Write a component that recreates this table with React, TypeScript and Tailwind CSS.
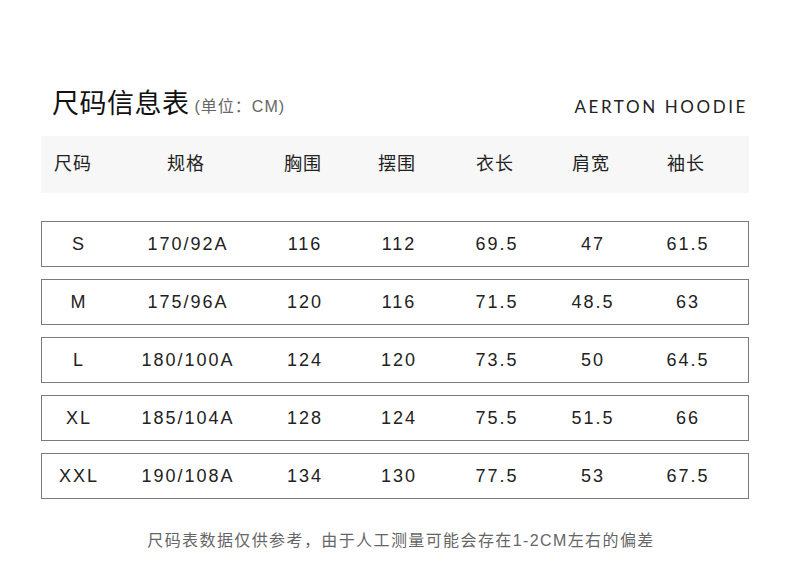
import React from 'react';

// size chart for the hoodie
const headers = ['尺码', '规格', '胸围', '摆围', '衣长', '肩宽', '袖长'];

const rows = [
  ['S', '170/92A', '116', '112', '69.5', '47', '61.5'],
  ['M', '175/96A', '120', '116', '71.5', '48.5', '63'],
  ['L', '180/100A', '124', '120', '73.5', '50', '64.5'],
  ['XL', '185/104A', '128', '124', '75.5', '51.5', '66'],
  ['XXL', '190/108A', '134', '130', '77.5', '53', '67.5'],
];

const cols = 'grid grid-cols-[72px_146px_88px_100px_96px_96px_94px_1fr] items-center';

const App = () => {
  return (
    <div
      className="w-[790px] h-[569px] bg-white text-[#222]"
      style={{ fontFamily: '"Liberation Sans", "Noto Sans CJK SC", sans-serif' }}
    >
      <div className="px-[41px] pt-[88px]">
        <div className="flex items-end justify-between h-[32px]">
          <div className="flex items-end pl-[11px]">
            <span className="text-[27px] leading-[32px] tracking-[0.5px] text-[#111]">尺码信息表</span>
            <span className="text-[16px] leading-[26px] tracking-[1px] text-[#666] ml-[5px]">(单位：CM)</span>
          </div>
          <span
            className="text-[17px] leading-[26px] tracking-[2.6px] text-[#222] pr-[1px]"
            style={{ fontFamily: 'Lato, "Liberation Sans", sans-serif' }}
          >
            AERTON HOODIE
          </span>
        </div>

        <div className={`${cols} mt-[16px] h-[57px] bg-[#f7f7f7] text-[18px] tracking-[1px]`}>
          {headers.map((h, i) => (
            <div key={h} className={i === 0 ? 'pl-[13px]' : 'text-center'}>
              {h}
            </div>
          ))}
        </div>

        <div className="mt-[28px] flex flex-col gap-[12px]">
          {rows.map((r) => (
            <div key={r[0]} className={`${cols} h-[46px] border border-[#7a7a7a] text-[18px] tracking-[2px]`}>
              {r.map((c, i) => (
                <div key={i} className="text-center pl-[2px]">
                  {c}
                </div>
              ))}
            </div>
          ))}
        </div>

        <div className="mt-[30px] pl-[12px] text-center text-[16px] tracking-[1.4px] text-[#666]">
          尺码表数据仅供参考，由于人工测量可能会存在1-2CM左右的偏差
        </div>
      </div>
    </div>
  );
};

export default App;
